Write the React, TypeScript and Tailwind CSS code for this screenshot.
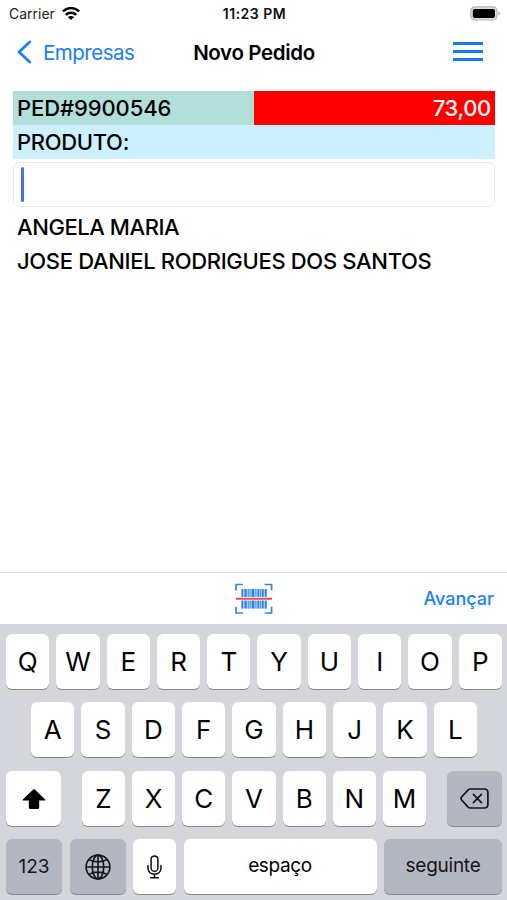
import React from 'react';

interface KeyProps {
  children: React.ReactNode;
  className?: string;
  dark?: boolean;
  label?: string;
}

const Key: React.FC<KeyProps> = ({ children, className = 'w-[43.3px] text-[26px]', dark = false, label }) => (
  <button
    aria-label={label}
    className={`flex h-[55px] shrink-0 items-center justify-center rounded-[6px] shadow-[0_1px_0.5px_#898a8d] ${
      dark ? 'bg-[#b3b7c2] text-[#15161a]' : 'bg-white text-black'
    } ${className}`}
  >
    {children}
  </button>
);

const topRow = ['Q', 'W', 'E', 'R', 'T', 'Y', 'U', 'I', 'O', 'P'];
const homeRow = ['A', 'S', 'D', 'F', 'G', 'H', 'J', 'K', 'L'];
const bottomRow = ['Z', 'X', 'C', 'V', 'B', 'N', 'M'];

// x offset and width of each barcode stripe
const stripes = [
  [0, 1.6],
  [3, 2.2],
  [6.4, 0.8],
  [8.2, 0.8],
  [10.2, 2.6],
  [14, 0.8],
  [16, 1.6],
  [18.6, 0.8],
  [20.4, 1.8],
  [23.4, 1.8],
];

const WifiIcon = () => (
  <svg width="18" height="14" viewBox="0 0 18 14" fill="none" stroke="#000" strokeWidth="2.5">
    <path d="M0.8 4.4C5.3 0 12.7 0 17.2 4.4" />
    <path d="M3.8 7.8C6.7 5.1 11.3 5.1 14.2 7.8" />
    <path d="M9 13.1L5.9 10C7.6 8.5 10.4 8.5 12.1 10Z" fill="#000" stroke="none" />
  </svg>
);

const BatteryIcon = () => (
  <svg width="31" height="15" viewBox="0 0 31 15">
    <rect x="0.8" y="0.8" width="26.2" height="13.2" rx="4" fill="#dcdcdc" stroke="#b8b8b8" strokeWidth="1.2" />
    <rect x="2.8" y="2.9" width="22.2" height="9" rx="2" fill="#000" />
    <path d="M28.4 5.2C30.6 6 30.6 8.8 28.4 9.6Z" fill="#b4b4b4" />
  </svg>
);

const BarcodeIcon = () => (
  <svg width="38" height="32" viewBox="0 0 38 32" fill="none">
    <path d="M1 7.5V1.5H8M29.6 1.5H36.6V7.5M36.6 23.7V30H29.6M8 30H1V23.7" stroke="#3489e8" strokeWidth="1.7" />
    <rect x="6.4" y="6" width="25.4" height="19.5" fill="#b3d5fa" />
    {stripes.map(([x, width]) => (
      <rect key={x} x={6.5 + x} y="6" width={width} height="19.5" fill="#2c82e6" />
    ))}
    <rect x="6" y="13.9" width="26.4" height="3.6" fill="#fff" />
    <path d="M1 15.7H37" stroke="#ee4b4b" strokeWidth="2" />
  </svg>
);

const ShiftIcon = () => (
  <svg width="24" height="20" viewBox="0 0 24 20" fill="#000">
    <path d="M11.2 0.4Q12 -0.3 12.8 0.4L23.2 10.4Q24 11.5 22.7 11.6H17.2V18.4Q17.2 20 15.7 20H8.3Q6.8 20 6.8 18.4V11.6H1.3Q0 11.5 0.8 10.4Z" />
  </svg>
);

const DeleteIcon = () => (
  <svg width="29" height="21" viewBox="0 0 29 21" fill="none" stroke="#15161a" strokeWidth="1.7" strokeLinecap="round" strokeLinejoin="round">
    <path d="M10.4 1H24.2Q27.9 1 27.9 4.7V16.3Q27.9 20 24.2 20H10.4Q9 20 7.9 18.9L1.6 12Q0.5 10.5 1.6 9L7.9 2.1Q9 1 10.4 1Z" />
    <path d="M13.4 6.3L21.4 14.7M21.4 6.3L13.4 14.7" />
  </svg>
);

const GlobeIcon = () => (
  <svg width="26" height="26" viewBox="0 0 26 26" fill="none" stroke="#15161a" strokeWidth="1.6">
    <circle cx="13" cy="13" r="11.9" />
    <ellipse cx="13" cy="13" rx="5.7" ry="11.9" />
    <path d="M13 1.2V24.8M1.2 13H24.8M4 5.6C9 8.6 17 8.6 22 5.6M4 20.4C9 17.4 17 17.4 22 20.4" />
  </svg>
);

const MicIcon = () => (
  <svg width="15" height="24" viewBox="0 0 15 24" fill="none" stroke="#111" strokeWidth="1.5" strokeLinecap="round">
    <rect x="4.1" y="0.9" width="6.8" height="15.4" rx="3.4" />
    <path d="M1 10.6V12.8C1 16.8 3.8 19.2 7.5 19.2S14 16.8 14 12.8V10.6M7.5 19.2V22.8M3.6 22.8H11.4" />
  </svg>
);

export default function App() {
  return (
    <div className="flex h-[900px] w-[507px] flex-col overflow-hidden bg-white font-['Inter','Liberation_Sans',sans-serif] text-black">
      {/* Status bar */}
      <div className="grid h-[27px] grid-cols-[1fr_auto_1fr] items-center pr-[6px] pl-[9px] text-[14px] leading-none">
        <div className="flex items-center gap-[7px] text-[#222]">
          <span>Carrier</span>
          <WifiIcon />
        </div>
        <span className="pr-[1px] text-center font-semibold tracking-[0.5px] text-[#111]">11:23 PM</span>
        <div className="flex justify-end">
          <BatteryIcon />
        </div>
      </div>

      {/* Navigation bar */}
      <header className="grid h-[64px] grid-cols-[1fr_auto_1fr] items-start pt-[12px] pr-[24px] pl-[17px]">
        <button className="flex h-[26px] items-center gap-[11px] text-[20.5px] leading-none tracking-[-0.5px] text-[#1a80f5]">
          <svg width="15" height="24" viewBox="0 0 15 24" fill="none" stroke="currentColor" strokeWidth="2.8" strokeLinecap="round" strokeLinejoin="round">
            <path d="M12.8 2L2 12L12.8 22" />
          </svg>
          <span className="pt-[2px]">Empresas</span>
        </button>
        <h1 className="flex h-[26px] items-center pt-[2px] pl-[8px] text-[20.5px] leading-none font-semibold tracking-[-0.35px] whitespace-nowrap">
          Novo Pedido
        </h1>
        <button aria-label="Menu" className="mt-[3px] flex h-[19px] w-[30px] flex-col justify-between justify-self-end">
          <span className="h-[3px] w-full bg-[#147bf3]" />
          <span className="h-[3px] w-full bg-[#147bf3]" />
          <span className="h-[3px] w-full bg-[#147bf3]" />
        </button>
      </header>

      {/* Order */}
      <main className="flex flex-1 flex-col pr-[12px] pl-[13px] text-[22px] font-medium tracking-[-0.33px]">
        <div className="flex h-[34px] leading-[34px]">
          <div className="w-[241px] bg-[#b2dfda] pl-[4px] tracking-[-0.1px]">PED#9900546</div>
          <div className="flex-1 bg-[#ff0000] pr-[4px] text-right text-white">73,00</div>
        </div>
        <div className="h-[34px] bg-[#cdf0fe] pl-[4px] leading-[34px]">PRODUTO:</div>
        <div className="mt-[3px] flex h-[45px] items-center rounded-[6px] border border-[#ececec] pl-[7px]">
          <span className="h-[35px] w-[3px] rounded-full bg-[#4a6fe3]" />
        </div>
        <ul className="mt-[3px] pl-[4px] leading-[34px]">
          <li className="tracking-[-0.43px]">ANGELA MARIA</li>
          <li>JOSE DANIEL RODRIGUES DOS SANTOS</li>
        </ul>
      </main>

      {/* Keyboard accessory */}
      <div className="grid h-[52px] shrink-0 grid-cols-3 items-center border-t border-[#dedee0] pr-[13px]">
        <button aria-label="Scan" className="col-start-2 justify-self-center pl-[14px]">
          <BarcodeIcon />
        </button>
        <button className="justify-self-end text-[18px] font-medium text-[#1a80f5]">Avançar</button>
      </div>

      {/* Keyboard */}
      <div className="flex h-[276px] shrink-0 flex-col gap-[13.5px] bg-[#d4d6dc] pt-[9.5px] pr-[5px] pl-[6px]">
        <div className="flex justify-between">
          {topRow.map((letter) => (
            <Key key={letter}>{letter}</Key>
          ))}
        </div>
        <div className="flex justify-between px-[25px]">
          {homeRow.map((letter) => (
            <Key key={letter}>{letter}</Key>
          ))}
        </div>
        <div className="flex justify-between">
          <Key label="Shift" className="w-[55px] pt-[1px]">
            <ShiftIcon />
          </Key>
          <div className="flex gap-[6.9px]">
            {bottomRow.map((letter) => (
              <Key key={letter}>{letter}</Key>
            ))}
          </div>
          <Key label="Delete" dark className="w-[55px]">
            <DeleteIcon />
          </Key>
        </div>
        <div className="flex justify-between">
          <Key dark className="w-[56px] pt-[1px] text-[19px]">123</Key>
          <Key label="Globe" dark className="w-[56px]">
            <GlobeIcon />
          </Key>
          <Key label="Dictate" className="w-[43px]">
            <MicIcon />
          </Key>
          <Key className="w-[193px] text-[19px] tracking-[-0.35px]">espaço</Key>
          <Key dark className="w-[118px] text-[19px] tracking-[-0.25px]">seguinte</Key>
        </div>
      </div>
    </div>
  );
}
